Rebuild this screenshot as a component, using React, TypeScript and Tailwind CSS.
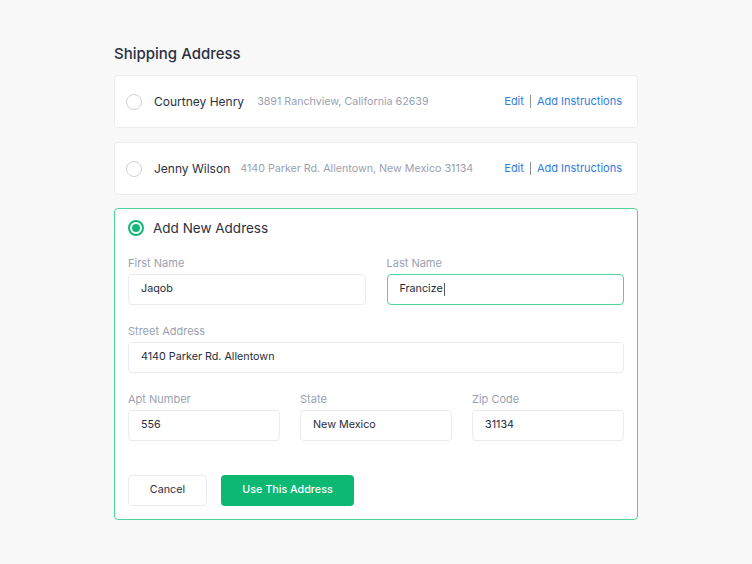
import { useState } from "react";

const savedAddresses = [
  { id: "courtney", name: "Courtney Henry", address: "3891 Ranchview, California 62639", gap: "ml-[13px]" },
  { id: "jenny", name: "Jenny Wilson", address: "4140 Parker Rd. Allentown, New Mexico 31134", gap: "ml-[10px]" },
];

function Radio({ checked }: { checked?: boolean }) {
  if (checked) {
    return (
      <span className="flex h-4 w-4 shrink-0 items-center justify-center rounded-full border-2 border-[#10b97a]">
        <span className="h-2 w-2 rounded-full bg-[#10b97a]" />
      </span>
    );
  }
  return <span className="h-4 w-4 shrink-0 rounded-full border-[1.5px] border-[#cdd2db]" />;
}

function Field({
  label,
  value,
  focused,
}: {
  label: string;
  value: string;
  focused?: boolean;
}) {
  return (
    <label className="flex flex-col">
      <span className="mb-[4px] text-[11px] leading-[14px] text-[#9aa1b1]">{label}</span>
      <div
        className={
          focused
            ? "flex h-[31px] items-center rounded-[4px] border border-[#4fd39b] bg-white px-3 text-[10.75px] text-[#262c3b]"
            : "flex h-[31px] items-center rounded-[4px] border border-[#e8ebf0] bg-white px-3 text-[10.75px] text-[#262c3b]"
        }
      >
        {value}
        {focused ? <span className="ml-px h-[13px] w-px bg-[#555b6b]" /> : null}
      </div>
    </label>
  );
}

export default function App() {
  const [selected] = useState("new");

  return (
    <div
      className="min-h-[564px] w-full bg-[#f8f8f9] pt-[44px]"
      style={{ fontFamily: "Inter, 'Liberation Sans', sans-serif" }}
    >
      <div className="mx-auto w-[524px]">
        <h1 className="mb-[11px] text-[15px] font-medium leading-[20px] text-[#2b3142]">
          Shipping Address
        </h1>

        <div className="flex flex-col">
          {savedAddresses.map((item, idx) => (
            <div
              key={item.id}
              className={
                idx === 0
                  ? "flex h-[53px] items-center rounded-[4px] border border-[#ebedf1] bg-white pl-[11px] pr-[15px]"
                  : "mt-[14px] flex h-[53px] items-center rounded-[4px] border border-[#ebedf1] bg-white pl-[11px] pr-[15px]"
              }
            >
              <Radio checked={selected === item.id} />
              <span className="ml-[12px] text-[12px] leading-[16px] text-[#2b3142]">{item.name}</span>
              <span className={`${item.gap} pt-px text-[10.7px] leading-[16px] text-[#9aa1b1]`}>
                {item.address}
              </span>
              <div className="ml-auto flex items-center text-[11px] text-[#2f7de1]">
                <a href="#edit">Edit</a>
                <span className="mx-[6px] h-[13px] w-px bg-[#8d93a0]" />
                <a href="#instructions">Add Instructions</a>
              </div>
            </div>
          ))}

          <div className="mt-[13px] rounded-[4px] border border-[#4fd39b] bg-white px-[13px] pb-[13px] pt-[9px]">
            <div className="flex h-[20px] items-center">
              <Radio checked={selected === "new"} />
              <span className="ml-[9px] text-[13.5px] text-[#2b3142]">Add New Address</span>
            </div>

            <div className="mt-[18px] grid grid-cols-2 gap-x-[21px]">
              <Field label="First Name" value="Jaqob" />
              <Field label="Last Name" value="Francize" focused />
            </div>

            <div className="mt-[19px]">
              <Field label="Street Address" value="4140 Parker Rd. Allentown" />
            </div>

            <div className="mt-[19px] grid grid-cols-3 gap-x-[20px]">
              <Field label="Apt Number" value="556" />
              <Field label="State" value="New Mexico" />
              <Field label="Zip Code" value="31134" />
            </div>

            <div className="mt-[34px] flex gap-[14px]">
              <button className="h-[31px] w-[79px] rounded-[4px] border border-[#e8ebf0] bg-white text-[10.75px] text-[#2b3142]">
                Cancel
              </button>
              <button className="h-[31px] w-[133px] rounded-[4px] bg-[#0db873] text-[10.75px] font-medium text-white">
                Use This Address
              </button>
            </div>
          </div>
        </div>
      </div>
    </div>
  );
}
